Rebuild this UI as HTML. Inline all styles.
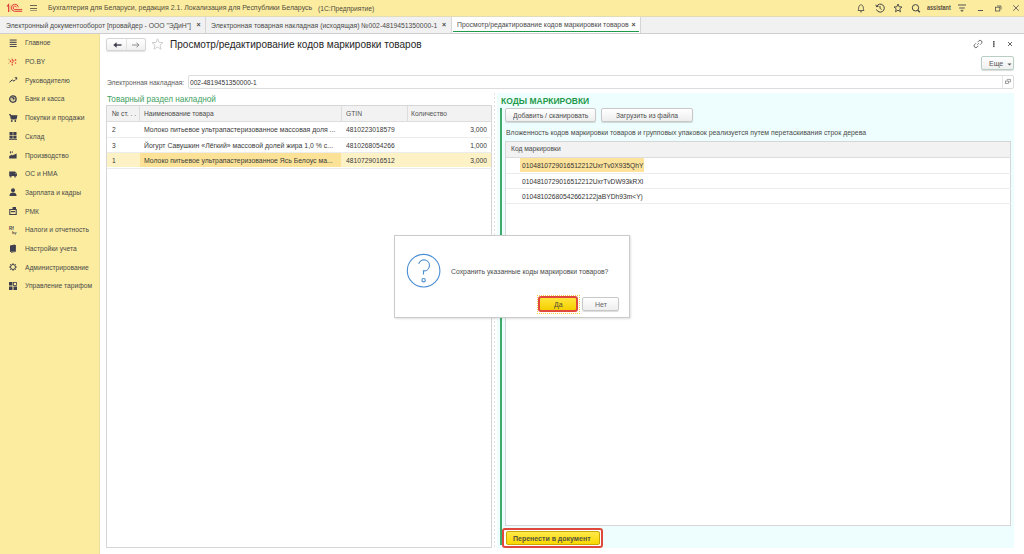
<!DOCTYPE html>
<html><head><meta charset="utf-8"><style>
html,body{margin:0;padding:0;width:1024px;height:554px;overflow:hidden;background:#fff}
body{position:relative;font-family:"Liberation Sans",sans-serif}
body>div,body>svg{position:absolute;box-sizing:border-box}
.t{white-space:nowrap}
svg{overflow:visible}
</style></head><body>
<div style="left:0px;top:0px;width:1024px;height:16px;background:#fbec9f"></div>
<div style="left:0px;top:16px;width:1024px;height:1px;background:#e3dcb8"></div>
<div style="left:0px;top:17px;width:1024px;height:16px;background:#f1f1f1"></div>
<div style="left:0px;top:33px;width:1024px;height:1px;background:#cfcfcf"></div>
<svg style="left:0px;top:0px" width="30" height="16" viewBox="0 0 30 16" fill="none"><path d="M7 6.5 L8.6 4.5 V12" stroke="#e4393b" stroke-width="1.1"/><path d="M10 5 V12" stroke="#d6a870" stroke-width="0.8"/><path d="M18.4 7.3 A3.55 3.55 0 1 0 14.8 11.35 H22.2" stroke="#e4393b" stroke-width="0.95"/><path d="M16.4 7.4 A1.66 1.66 0 1 0 14.8 9.46 H22.2" stroke="#e4393b" stroke-width="0.95"/><path d="M15.5 10.4 H22" stroke="#d9b070" stroke-width="0.8"/></svg>
<div style="left:30px;top:5px;width:7px;height:1px;background:#6d6750"></div>
<div style="left:30px;top:8px;width:7px;height:1px;background:#6d6750"></div>
<div style="left:30px;top:10.2px;width:7px;height:1.1px;background:#a49b70"></div>
<div class="t" style="left:47.5px;top:4.39px;font-size:7.806px;line-height:7.806px;color:#524c40;font-weight:normal;transform:scaleX(0.8929);transform-origin:0 0;">Бухгалтерия для Беларуси, редакция 2.1. Локализация для Республики Беларусь</div>
<div class="t" style="left:318.2px;top:4.63px;font-size:7.526px;line-height:7.526px;color:#524c40;font-weight:normal;transform:scaleX(0.8929);transform-origin:0 0;">(1С:Предприятие)</div>
<svg style="left:856px;top:3px" width="10" height="10" viewBox="0 0 10 10" fill="none" stroke="#444" stroke-width="0.8"><path d="M2 7.5 C2.8 6.5 2.5 5.5 2.8 4 C3.2 2.5 4 1.8 5 1.8 C6 1.8 6.8 2.5 7.2 4 C7.5 5.5 7.2 6.5 8 7.5 Z"/><path d="M4 8.8H6"/></svg>
<svg style="left:875px;top:3px" width="10" height="10" viewBox="0 0 10 10" fill="none" stroke="#444" stroke-width="1"><path d="M1.6 3.5 A4 4 0 1 1 1.5 6.5"/><path d="M0.8 1.8 L1.6 3.8 L3.6 3.2"/><path d="M5 3V5.2L6.5 6.7"/></svg>
<svg style="left:893px;top:3px" width="10" height="10" viewBox="0 0 10 10" fill="none" stroke="#444" stroke-width="0.9"><path d="M5 1 L6.1 3.8 L9 4 L6.8 5.8 L7.5 8.8 L5 7.2 L2.5 8.8 L3.2 5.8 L1 4 L3.9 3.8 Z"/></svg>
<svg style="left:911px;top:3px" width="10" height="10" viewBox="0 0 10 10" fill="none" stroke="#444" stroke-width="1"><circle cx="4.5" cy="4.8" r="3.2"/><path d="M6.8 7.2 L8.8 9.2" stroke-width="1.4"/></svg>
<div class="t" style="left:926.5px;top:4.85px;font-size:6.325px;line-height:6.325px;color:#5a4f3f;font-weight:bold;transform:scaleX(0.8696);transform-origin:0 0;">assistant</div>
<svg style="left:958px;top:4px" width="8" height="9" viewBox="0 0 8 9" fill="none" stroke="#555" stroke-width="0.8"><path d="M0 1H8M1.2 4H6.8" stroke-width="1"/><path d="M2.7 6.2H5.3L4 7.7Z" fill="#555" stroke-width="0.5"/></svg>
<div style="left:977.5px;top:10px;width:5px;height:1px;background:#555"></div>
<svg style="left:995px;top:5px" width="7" height="7" viewBox="0 0 7 7" fill="none" stroke="#555" stroke-width="0.8"><rect x="0.5" y="2.2" width="4.3" height="3.8"/><path d="M2 1H6V4.5"/></svg>
<svg style="left:1013px;top:5px" width="6" height="6" viewBox="0 0 6 6" fill="none" stroke="#555" stroke-width="0.85"><path d="M0.2 0.2L5.8 5.8M5.8 0.2L0.2 5.8"/></svg>
<div class="t" style="left:6px;top:21.50px;font-size:7.208px;line-height:7.208px;color:#4a4a4a;font-weight:normal;transform:scaleX(0.9434);transform-origin:0 0;">Электронный документооборот [провайдер - ООО &quot;ЭДиН&quot;]</div>
<div class="t" style="left:196.5px;top:21.47px;font-size:7.000px;line-height:7.000px;color:#444;font-weight:bold;">×</div>
<div style="left:205px;top:17px;width:1px;height:16px;background:#d6d6d6"></div>
<div class="t" style="left:211px;top:21.50px;font-size:7.208px;line-height:7.208px;color:#4a4a4a;font-weight:normal;transform:scaleX(0.9434);transform-origin:0 0;">Электронная товарная накладная (исходящая) №002-4819451350000-1</div>
<div class="t" style="left:442px;top:21.47px;font-size:7.000px;line-height:7.000px;color:#444;font-weight:bold;">×</div>
<div style="left:451px;top:17px;width:1px;height:16px;background:#d6d6d6"></div>
<div style="left:452px;top:17px;width:188px;height:16px;background:#ffffff"></div>
<div style="left:453px;top:31px;width:186px;height:1.2px;background:#1f9a4a"></div>
<div class="t" style="left:456.5px;top:21.44px;font-size:7.282px;line-height:7.282px;color:#4a4a4a;font-weight:normal;transform:scaleX(0.9434);transform-origin:0 0;">Просмотр/редактирование кодов маркировки товаров</div>
<div class="t" style="left:631.5px;top:21.47px;font-size:7.000px;line-height:7.000px;color:#444;font-weight:bold;">×</div>
<div style="left:640px;top:17px;width:1px;height:16px;background:#d6d6d6"></div>
<div style="left:0px;top:34px;width:100px;height:520px;background:#fbec9f"></div>
<svg style="left:9px;top:38.90px" width="8" height="8" viewBox="0 0 8 8"><rect x="0.7" y="0.2" width="6.9" height="2.1" fill="#8f8a70"/><path d="M0.7 3.4H7.6M0.7 5.45H7.6M0.7 7.5H7.6" stroke="#3f3f4f" stroke-width="0.95"/></svg>
<div class="t" style="left:24.5px;top:39.44px;font-size:8.040px;line-height:8.040px;color:#4a4a4a;font-weight:normal;transform:scaleX(0.8333);transform-origin:0 0;">Главное</div>
<svg style="left:9px;top:57.58px" width="8" height="8" viewBox="0 0 8 8"><g fill="#e5423a"><circle cx="3.3" cy="1.9" r="0.8"/><circle cx="6.5" cy="1.9" r="0.85"/><ellipse cx="1.4" cy="3.2" rx="0.7" ry="1"/><circle cx="4.5" cy="2.9" r="0.75"/><ellipse cx="3.3" cy="4.4" rx="0.7" ry="1"/><circle cx="6.5" cy="5" r="0.8"/><circle cx="3.3" cy="6.8" r="0.8"/></g><g fill="#d8b373"><circle cx="0" cy="1.4" r="0.8"/><circle cx="-0.2" cy="5.3" r="0.8"/><circle cx="3.1" cy="0.2" r="0.6"/></g></svg>
<div class="t" style="left:24.5px;top:58.12px;font-size:8.040px;line-height:8.040px;color:#4a4a4a;font-weight:normal;transform:scaleX(0.8333);transform-origin:0 0;">РО.BY</div>
<svg style="left:9px;top:76.26px" width="8" height="8" viewBox="0 0 8 8"><path d="M0.5 6.3L3.2 3.9L5 5.2L6.6 3.5" stroke="#3f3f4f" stroke-width="1" fill="none"/><path d="M5.3 1.3H8.1V4.1Z" fill="#3f3f4f"/></svg>
<div class="t" style="left:24.5px;top:76.80px;font-size:8.040px;line-height:8.040px;color:#4a4a4a;font-weight:normal;transform:scaleX(0.8333);transform-origin:0 0;">Руководителю</div>
<svg style="left:9px;top:94.94px" width="8" height="8" viewBox="0 0 8 8"><circle cx="3.9" cy="4.1" r="3.2" fill="#d9cf95" stroke="#3f3f4f" stroke-width="1.3"/><path d="M2.4 2.6H4.3A1.1 1.1 0 0 1 4.6 4.6" stroke="#3f3f4f" stroke-width="1" fill="none"/><circle cx="4.4" cy="3.6" r="0.8" fill="#3f3f4f"/></svg>
<div class="t" style="left:24.5px;top:95.48px;font-size:8.040px;line-height:8.040px;color:#4a4a4a;font-weight:normal;transform:scaleX(0.8333);transform-origin:0 0;">Банк и касса</div>
<svg style="left:9px;top:113.62px" width="8" height="8" viewBox="0 0 8 8"><path d="M0 0.8H1.5L2.3 5H7L7.8 1.8H1.8" stroke="#3f3f4f" stroke-width="1.1" fill="#3f3f4f"/><circle cx="2.8" cy="7" r="0.9" fill="#3f3f4f"/><circle cx="6.3" cy="7" r="0.9" fill="#3f3f4f"/></svg>
<div class="t" style="left:24.5px;top:114.16px;font-size:8.040px;line-height:8.040px;color:#4a4a4a;font-weight:normal;transform:scaleX(0.8333);transform-origin:0 0;">Покупки и продажи</div>
<svg style="left:9px;top:132.30px" width="8" height="8" viewBox="0 0 8 8"><rect x="0.5" y="0" width="3.2" height="3" fill="#3f3f4f"/><rect x="4.3" y="0" width="3.2" height="3" fill="#3f3f4f"/><rect x="0.5" y="3.6" width="3.2" height="3" fill="#3f3f4f"/><rect x="4.3" y="3.6" width="3.2" height="3" fill="#3f3f4f"/><path d="M0 7.5H8" stroke="#3f3f4f" stroke-width="0.8"/></svg>
<div class="t" style="left:24.5px;top:132.84px;font-size:8.040px;line-height:8.040px;color:#4a4a4a;font-weight:normal;transform:scaleX(0.8333);transform-origin:0 0;">Склад</div>
<svg style="left:9px;top:150.98px" width="8" height="8" viewBox="0 0 8 8"><path d="M0.2 7.6V5L3.3 3.4V4.6L7.6 2.6V7.6Z" fill="#3f3f4f"/><ellipse cx="1.5" cy="1.4" rx="0.65" ry="1.1" fill="#3f3f4f"/><ellipse cx="3.3" cy="1" rx="0.6" ry="0.85" fill="#3f3f4f"/></svg>
<div class="t" style="left:24.5px;top:151.52px;font-size:8.040px;line-height:8.040px;color:#4a4a4a;font-weight:normal;transform:scaleX(0.8333);transform-origin:0 0;">Производство</div>
<svg style="left:9px;top:169.66px" width="8" height="8" viewBox="0 0 8 8"><path d="M0.2 1.4H6L7.9 3.6V5.9H0.2Z" fill="#3f3f4f"/><path d="M6.2 2.2L7.3 3.5V4.2H6.2Z" fill="#8f8a70"/><circle cx="1.6" cy="6.6" r="1" fill="#3f3f4f"/><circle cx="6.2" cy="6.6" r="1" fill="#3f3f4f"/><circle cx="1.6" cy="6.6" r="0.35" fill="#d8cf95"/><circle cx="6.2" cy="6.6" r="0.35" fill="#d8cf95"/></svg>
<div class="t" style="left:24.5px;top:170.20px;font-size:8.040px;line-height:8.040px;color:#4a4a4a;font-weight:normal;transform:scaleX(0.8333);transform-origin:0 0;">ОС и НМА</div>
<svg style="left:9px;top:188.34px" width="8" height="8" viewBox="0 0 8 8"><circle cx="4" cy="2.2" r="2" fill="#3f3f4f"/><path d="M0.5 8C0.5 5.5 2 4.6 4 4.6C6 4.6 7.5 5.5 7.5 8Z" fill="#3f3f4f"/></svg>
<div class="t" style="left:24.5px;top:188.88px;font-size:8.040px;line-height:8.040px;color:#4a4a4a;font-weight:normal;transform:scaleX(0.8333);transform-origin:0 0;">Зарплата и кадры</div>
<svg style="left:9px;top:207.02px" width="8" height="8" viewBox="0 0 8 8"><path d="M0.8 2.5H7.2V7.5H0.8Z" fill="none" stroke="#3f3f4f" stroke-width="1.1"/><rect x="3.5" y="0" width="3.5" height="2.5" fill="#3f3f4f"/><rect x="2" y="4" width="4" height="1.2" fill="#3f3f4f"/></svg>
<div class="t" style="left:24.5px;top:207.56px;font-size:8.040px;line-height:8.040px;color:#4a4a4a;font-weight:normal;transform:scaleX(0.8333);transform-origin:0 0;">РМК</div>
<svg style="left:9px;top:225.70px" width="8" height="8" viewBox="0 0 8 8"><text x="0" y="3.8" font-size="4.5" font-family="Liberation Sans" fill="#3f3f4f" font-weight="bold">Rf</text><text x="3" y="8" font-size="4" font-family="Liberation Sans" fill="#3f3f4f" font-weight="bold">ky</text></svg>
<div class="t" style="left:24.5px;top:226.24px;font-size:8.040px;line-height:8.040px;color:#4a4a4a;font-weight:normal;transform:scaleX(0.8333);transform-origin:0 0;">Налоги и отчетность</div>
<svg style="left:9px;top:244.38px" width="8" height="8" viewBox="0 0 8 8"><path d="M1 1.5L6 0.5V7L1 8Z" fill="#3f3f4f"/><path d="M6.5 1V7.5L2 8.3" stroke="#3f3f4f" stroke-width="0.9" fill="none"/></svg>
<div class="t" style="left:24.5px;top:244.92px;font-size:8.040px;line-height:8.040px;color:#4a4a4a;font-weight:normal;transform:scaleX(0.8333);transform-origin:0 0;">Настройки учета</div>
<svg style="left:9px;top:263.06px" width="8" height="8" viewBox="0 0 8 8"><path d="M4 0.2V7.8M0.2 4H7.8M1.3 1.3L6.7 6.7M6.7 1.3L1.3 6.7" stroke="#3f3f4f" stroke-width="1"/><circle cx="4" cy="4" r="2.5" fill="#fbec9f" stroke="#3f3f4f" stroke-width="1"/></svg>
<div class="t" style="left:24.5px;top:263.60px;font-size:8.040px;line-height:8.040px;color:#4a4a4a;font-weight:normal;transform:scaleX(0.8333);transform-origin:0 0;">Администрирование</div>
<svg style="left:9px;top:281.74px" width="8" height="8" viewBox="0 0 8 8"><rect x="0" y="0" width="3.5" height="3.5" fill="#3f3f4f"/><rect x="4.5" y="0.5" width="3" height="3" fill="none" stroke="#3f3f4f" stroke-width="0.8"/><rect x="0" y="4.5" width="3.5" height="3.5" fill="#3f3f4f"/><rect x="4.5" y="4.5" width="3.5" height="3.5" fill="#3f3f4f"/></svg>
<div class="t" style="left:24.5px;top:282.28px;font-size:8.040px;line-height:8.040px;color:#4a4a4a;font-weight:normal;transform:scaleX(0.8333);transform-origin:0 0;">Управление тарифом</div>
<div style="left:100px;top:34px;width:924px;height:520px;background:#ffffff"></div>
<div style="left:99px;top:34px;width:1px;height:520px;background:#ecdf9c"></div>
<div style="left:106px;top:38px;width:40px;height:13px;border:1px solid #d2d6d6;border-radius:2px;background:linear-gradient(#ffffff,#f0f0f0);box-shadow:0 1px 1px rgba(0,0,0,0.12)"></div>
<div style="left:126px;top:39px;width:1px;height:11px;background:#e2e2e2"></div>
<svg style="left:112.5px;top:41.5px" width="9" height="6" viewBox="0 0 9 6"><path d="M8.5 3H3" stroke="#3a3a4a" stroke-width="1.4"/><path d="M0.3 3L3.6 0.3V5.7Z" fill="#3a3a4a"/></svg>
<svg style="left:132px;top:41.5px" width="8" height="6" viewBox="0 0 8 6"><path d="M0 3H6.5" stroke="#8f8f8f" stroke-width="1"/><path d="M4.5 0.7L7 3L4.5 5.3" stroke="#8f8f8f" stroke-width="1" fill="none"/></svg>
<svg style="left:151px;top:38px" width="13" height="12" viewBox="0 0 13 12" fill="none" stroke="#c8c8c8" stroke-width="0.9"><path d="M6.5 0.8 L8 4.4 L12 4.6 L9 7.1 L10 11.2 L6.5 9 L3 11.2 L4 7.1 L1 4.6 L5 4.4 Z"/></svg>
<div class="t" style="left:170px;top:40.29px;font-size:10.050px;line-height:10.050px;color:#262626;font-weight:normal;">Просмотр/редактирование кодов маркировки товаров</div>
<svg style="left:973px;top:39px" width="10" height="10" viewBox="0 0 10 10" fill="none" stroke="#5a5a5a" stroke-width="0.9"><path d="M4.6 3.2 L5.9 1.9 A1.75 1.75 0 0 1 8.4 4.4 L7.1 5.7"/><path d="M5.4 6.8 L4.1 8.1 A1.75 1.75 0 0 1 1.6 5.6 L2.9 4.3"/><path d="M4 6L6 4" stroke-dasharray="1 0.6"/></svg>
<svg style="left:992px;top:40px" width="3" height="8" viewBox="0 0 3 8" fill="#555"><rect x="1" y="1" width="1.6" height="1.7"/><rect x="1" y="3.2" width="1.6" height="1.7"/><rect x="1" y="5.4" width="1.6" height="1.7"/></svg>
<svg style="left:1008px;top:42px" width="4" height="4" viewBox="0 0 4 4" fill="none" stroke="#555" stroke-width="0.9"><path d="M0 0L4 4M4 0L0 4"/></svg>
<div style="left:981px;top:56px;width:33px;height:13.5px;border:1px solid #b9cfc4;border-radius:2px;background:linear-gradient(#ffffff,#efefef);box-shadow:0 1px 1px rgba(0,0,0,0.15)"></div>
<div class="t" style="left:989px;top:60.39px;font-size:8.050px;line-height:8.050px;color:#555;font-weight:normal;transform:scaleX(0.8696);transform-origin:0 0;">Еще</div>
<svg style="left:1006.5px;top:62.5px" width="5" height="3" viewBox="0 0 5 3"><path d="M0.5 0.5H4.5L2.5 2.5Z" fill="#555"/></svg>
<div class="t" style="left:106.8px;top:78.85px;font-size:7.504px;line-height:7.504px;color:#5c5c5c;font-weight:normal;transform:scaleX(0.8929);transform-origin:0 0;">Электронная накладная:</div>
<div style="left:188px;top:75px;width:826px;height:14px;border:1px solid #dcdcdc;border-radius:2px;background:#fff"></div>
<div style="left:1002px;top:76px;width:1px;height:12px;background:#e6e6e6"></div>
<svg style="left:1004.5px;top:78.5px" width="6" height="5" viewBox="0 0 7 6" fill="none" stroke="#777" stroke-width="0.8"><rect x="0.5" y="2.5" width="3.5" height="3"/><path d="M2.5 2V0.5H6.5V3.5H4.5"/></svg>
<div class="t" style="left:190.3px;top:78.94px;font-size:7.392px;line-height:7.392px;color:#333;font-weight:normal;transform:scaleX(0.8929);transform-origin:0 0;">002-4819451350000-1</div>
<div class="t" style="left:106.8px;top:94.76px;font-size:9.020px;line-height:9.020px;color:#3f9f62;font-weight:normal;transform:scaleX(0.9091);transform-origin:0 0;">Товарный раздел накладной</div>
<div style="left:106px;top:105px;width:386px;height:443px;border:1px solid #d6d6d6;background:#fff"></div>
<div style="left:107px;top:106px;width:384px;height:15px;background:#f2f2f2"></div>
<div style="left:107px;top:121px;width:385px;height:1px;background:#dddddd"></div>
<div style="left:139px;top:106px;width:1px;height:15px;background:#dcdcdc"></div>
<div style="left:341px;top:106px;width:1px;height:15px;background:#dcdcdc"></div>
<div style="left:407px;top:106px;width:1px;height:15px;background:#dcdcdc"></div>
<div class="t" style="left:111.8px;top:109.75px;font-size:7.504px;line-height:7.504px;color:#4a4a4a;font-weight:normal;transform:scaleX(0.8929);transform-origin:0 0;">№ ст. . .</div>
<div class="t" style="left:143.6px;top:109.75px;font-size:7.504px;line-height:7.504px;color:#4a4a4a;font-weight:normal;transform:scaleX(0.8929);transform-origin:0 0;">Наименование товара</div>
<div class="t" style="left:346px;top:109.75px;font-size:7.504px;line-height:7.504px;color:#555;font-weight:normal;transform:scaleX(0.8929);transform-origin:0 0;">GTIN</div>
<div class="t" style="left:411.4px;top:109.75px;font-size:7.504px;line-height:7.504px;color:#555;font-weight:normal;transform:scaleX(0.8929);transform-origin:0 0;">Количество</div>
<div style="left:107px;top:136.5px;width:385px;height:1px;background:#ececec"></div>
<div class="t" style="left:111.8px;top:126.26px;font-size:7.370px;line-height:7.370px;color:#3a3a3a;font-weight:normal;transform:scaleX(0.9091);transform-origin:0 0;">2</div>
<div class="t" style="left:143.6px;top:126.19px;font-size:7.452px;line-height:7.452px;color:#3a3a3a;font-weight:normal;transform:scaleX(0.9259);transform-origin:0 0;">Молоко питьевое ультрапастеризованное массовая доля ...</div>
<div class="t" style="left:346px;top:126.21px;font-size:7.425px;line-height:7.425px;color:#3a3a3a;font-weight:normal;transform:scaleX(0.9091);transform-origin:0 0;">4810223018579</div>
<div class="t" style="left:186.8px;width:300px;text-align:right;top:126.21px;font-size:7.425px;line-height:7.425px;color:#3a3a3a;font-weight:normal;transform:scaleX(0.9091);transform-origin:100% 0;">3,000</div>
<div style="left:107px;top:152.0px;width:385px;height:1px;background:#ececec"></div>
<div class="t" style="left:111.8px;top:141.76px;font-size:7.370px;line-height:7.370px;color:#3a3a3a;font-weight:normal;transform:scaleX(0.9091);transform-origin:0 0;">3</div>
<div class="t" style="left:143.6px;top:141.69px;font-size:7.452px;line-height:7.452px;color:#3a3a3a;font-weight:normal;transform:scaleX(0.9259);transform-origin:0 0;">Йогурт Савушкин «Лёгкий» массовой долей жира 1,0 % с...</div>
<div class="t" style="left:346px;top:141.71px;font-size:7.425px;line-height:7.425px;color:#3a3a3a;font-weight:normal;transform:scaleX(0.9091);transform-origin:0 0;">4810268054266</div>
<div class="t" style="left:186.8px;width:300px;text-align:right;top:141.71px;font-size:7.425px;line-height:7.425px;color:#3a3a3a;font-weight:normal;transform:scaleX(0.9091);transform-origin:100% 0;">1,000</div>
<div style="left:107px;top:153px;width:384px;height:14.2px;background:#fdf1c6"></div>
<div style="left:140px;top:153px;width:201px;height:14.2px;background:#fbe297"></div>
<div style="left:107px;top:167.5px;width:385px;height:1px;background:#ececec"></div>
<div class="t" style="left:111.8px;top:157.26px;font-size:7.370px;line-height:7.370px;color:#3a3a3a;font-weight:normal;transform:scaleX(0.9091);transform-origin:0 0;">1</div>
<div class="t" style="left:143.6px;top:157.19px;font-size:7.452px;line-height:7.452px;color:#3a3a3a;font-weight:normal;transform:scaleX(0.9259);transform-origin:0 0;">Молоко питьевое ультрапастеризованное Ясь Белоус ма...</div>
<div class="t" style="left:346px;top:157.21px;font-size:7.425px;line-height:7.425px;color:#3a3a3a;font-weight:normal;transform:scaleX(0.9091);transform-origin:0 0;">4810729016512</div>
<div class="t" style="left:186.8px;width:300px;text-align:right;top:157.21px;font-size:7.425px;line-height:7.425px;color:#3a3a3a;font-weight:normal;transform:scaleX(0.9091);transform-origin:100% 0;">3,000</div>
<div style="left:494px;top:93px;width:1px;height:455px;background:repeating-linear-gradient(#e2e2e2 0 2px,transparent 2px 4px)"></div>
<div style="left:497px;top:93px;width:517px;height:455px;background:#eefefe"></div>
<div class="t" style="left:500.6px;top:96.14px;font-size:9.520px;line-height:9.520px;color:#1f9a4a;font-weight:bold;transform:scaleX(0.8929);transform-origin:0 0;">КОДЫ МАРКИРОВКИ</div>
<div style="left:500px;top:108px;width:1.6px;height:437px;background:#3eaa6c"></div>
<div style="left:505px;top:108px;width:91px;height:14px;border:1px solid #c8c8c8;border-radius:2px;background:linear-gradient(#ffffff,#eeeeee);box-shadow:0 1px 1px rgba(0,0,0,0.15)"></div>
<div class="t" style="left:512.5px;top:112.01px;font-size:7.672px;line-height:7.672px;color:#4d4d4d;font-weight:normal;transform:scaleX(0.8929);transform-origin:0 0;">Добавить / сканировать</div>
<div style="left:601px;top:108px;width:92px;height:14px;border:1px solid #c8c8c8;border-radius:2px;background:linear-gradient(#ffffff,#eeeeee);box-shadow:0 1px 1px rgba(0,0,0,0.15)"></div>
<div class="t" style="left:615.8px;top:112.10px;font-size:7.560px;line-height:7.560px;color:#4d4d4d;font-weight:normal;transform:scaleX(0.8929);transform-origin:0 0;">Загрузить из файла</div>
<div class="t" style="left:506px;top:128.56px;font-size:7.728px;line-height:7.728px;color:#4a4a4a;font-weight:normal;transform:scaleX(0.8929);transform-origin:0 0;">Вложенность кодов маркировки товаров и групповых упаковок реализуется путем перетаскивания строк дерева</div>
<div style="left:505px;top:141px;width:506px;height:385px;border:1px solid #d6d6d6;background:#fff"></div>
<div style="left:506px;top:142px;width:504px;height:15px;background:#f2f2f2"></div>
<div style="left:506px;top:157px;width:505px;height:1px;background:#dddddd"></div>
<div class="t" style="left:510.5px;top:145.10px;font-size:7.504px;line-height:7.504px;color:#4a4a4a;font-weight:normal;transform:scaleX(0.8929);transform-origin:0 0;">Код маркировки</div>
<div style="left:520px;top:158px;width:124px;height:14px;background:#fde39c"></div>
<div style="left:506px;top:172.8px;width:505px;height:1px;background:#ececec"></div>
<div class="t" style="left:521.5px;top:162.25px;font-size:7.504px;line-height:7.504px;color:#333;font-weight:normal;transform:scaleX(0.8929);transform-origin:0 0;">0104810729016512212UxrTv0X935QhY</div>
<div style="left:506px;top:188.3px;width:505px;height:1px;background:#ececec"></div>
<div class="t" style="left:521.5px;top:177.75px;font-size:7.504px;line-height:7.504px;color:#333;font-weight:normal;transform:scaleX(0.8929);transform-origin:0 0;">0104810729016512212UxrTvDW93kRXl</div>
<div style="left:506px;top:203.3px;width:505px;height:1px;background:#ececec"></div>
<div class="t" style="left:521.5px;top:192.75px;font-size:7.504px;line-height:7.504px;color:#333;font-weight:normal;transform:scaleX(0.8929);transform-origin:0 0;">01048102680542662122jaBYDh93m&lt;Y)</div>
<div style="left:502px;top:528px;width:101px;height:20px;border:2px solid #e0483c;border-radius:3px;background:#fff"></div>
<div style="left:505.5px;top:531px;width:94px;height:14px;border:1px solid #c9a800;border-radius:2px;background:linear-gradient(#ffe94a,#fad800)"></div>
<div class="t" style="left:513.2px;top:534.96px;font-size:7.840px;line-height:7.840px;color:#55533f;font-weight:bold;transform:scaleX(0.8929);transform-origin:0 0;">Перенести в документ</div>
<div style="left:394px;top:235px;width:236px;height:83px;border:1px solid #cbcbcb;background:#fff;box-shadow:1px 1px 2px rgba(0,0,0,0.12)"></div>
<svg style="left:405px;top:252px" width="38" height="38" viewBox="0 0 38 38" fill="none" stroke="#4a8fd3" stroke-width="1.1"><circle cx="18.6" cy="18.7" r="16.3"/><path d="M13.7 11.8 A5.5 5.5 0 1 1 18.5 18.9 V22.6" stroke-width="1.15"/><circle cx="18.6" cy="28.2" r="1.7"/></svg>
<div class="t" style="left:451px;top:267.70px;font-size:7.683px;line-height:7.683px;color:#4a4a4a;font-weight:normal;transform:scaleX(0.8929);transform-origin:0 0;">Сохранить указанные коды маркировки товаров?</div>
<div style="left:538px;top:296px;width:40px;height:16px;border:2px solid #e0483c;border-radius:3px;background:linear-gradient(#ffe53a,#f4cf00)"></div>
<div style="left:537px;top:295px;width:43px;height:19px;border:1px dotted #f3cf4a"></div>
<div class="t" style="left:553.7px;top:301.16px;font-size:7.840px;line-height:7.840px;color:#4a4a3a;font-weight:normal;transform:scaleX(0.8929);transform-origin:0 0;">Да</div>
<div style="left:582px;top:297px;width:37px;height:14px;border:1px solid #c8c8c8;border-radius:2px;background:linear-gradient(#ffffff,#eeeeee);box-shadow:0 1px 1px rgba(0,0,0,0.15)"></div>
<div class="t" style="left:595px;top:301.16px;font-size:7.840px;line-height:7.840px;color:#666;font-weight:normal;transform:scaleX(0.8929);transform-origin:0 0;">Нет</div>
</body></html>
